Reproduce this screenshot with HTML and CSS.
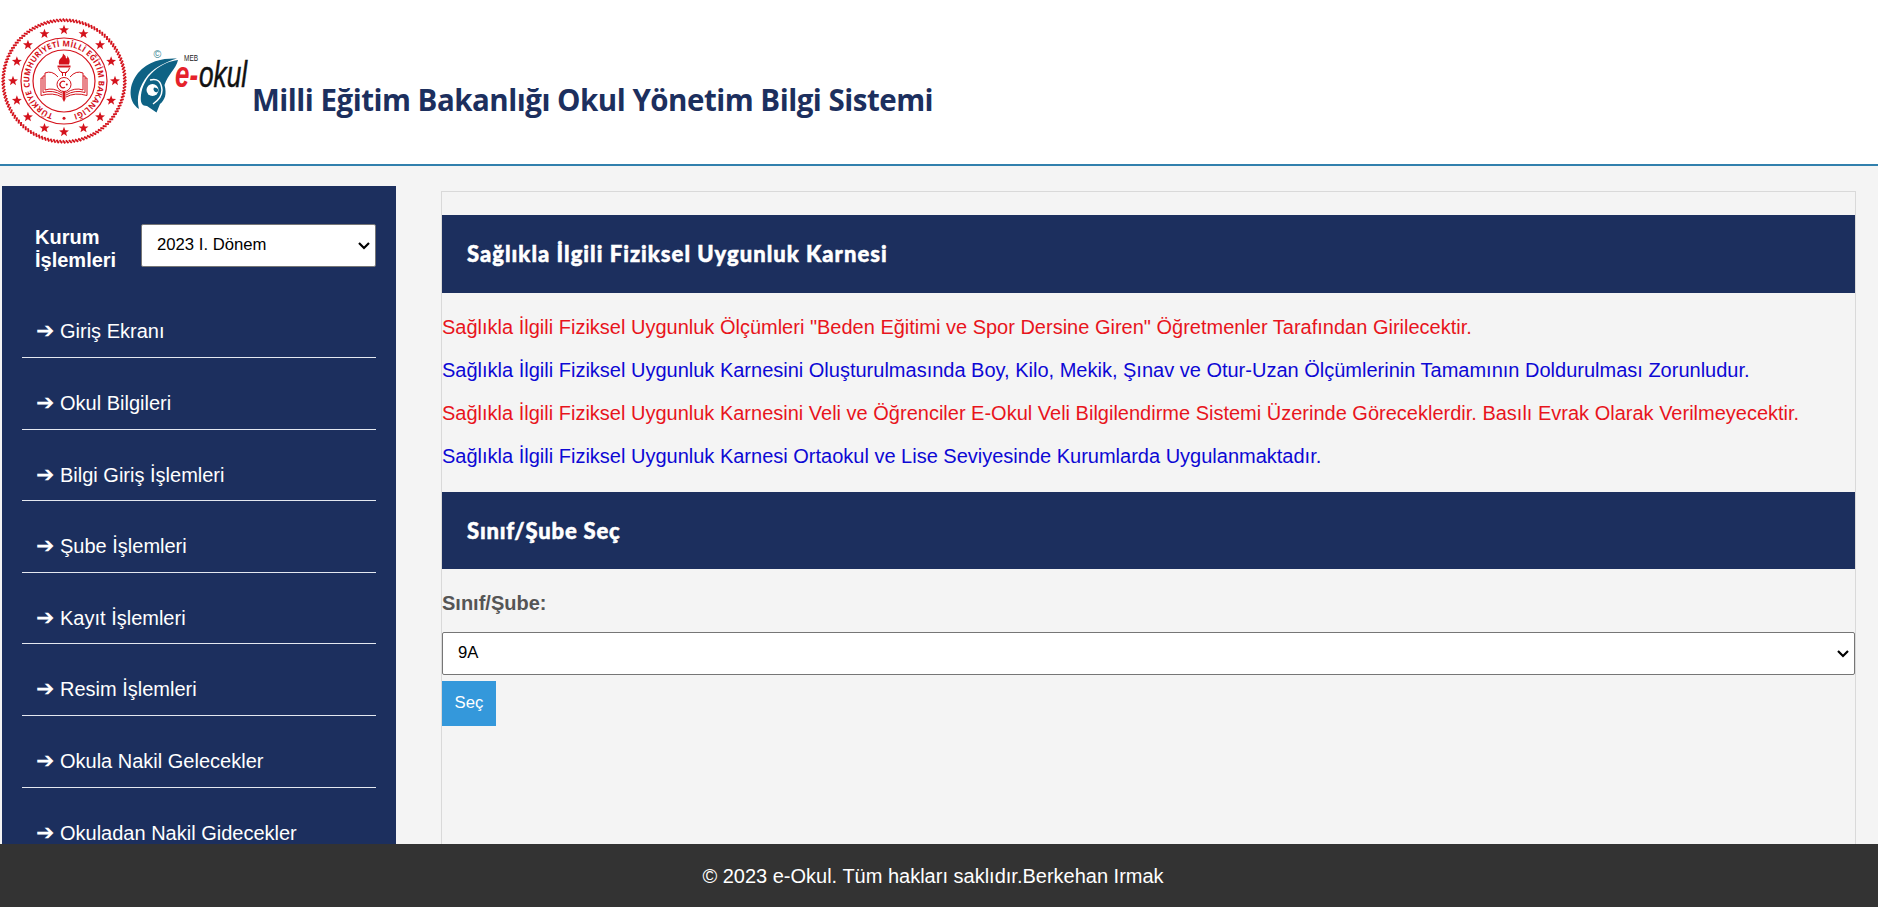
FILE: index.html
```html
<!DOCTYPE html>
<html lang="tr">
<head>
<meta charset="utf-8">
<title>e-Okul</title>
<link rel="stylesheet" href="styles.css">
</head>
<body>
<header class="header">
  <svg class="seal" width="128" height="128" viewBox="-64 -64 128 128">
    <defs>
      <path id="ring" d="M0 34.600A34.600 34.600 0 1 1 .01 34.600"/>
      <path id="star" d="M0-5.200 1.300-1.700 4.950-1.600 2.100.700 3.050 4.200 0 2.100-3.050 4.200-2.100.700-4.950-1.600-1.300-1.700Z"/>
    </defs>
    <g fill="none" stroke="#d4121c">
      <circle r="43" stroke-width="1.200"/>
      <circle r="31" stroke-width="1.200"/>
    </g>
    <g id="rope" stroke="#d4121c" stroke-width="1.900"></g>
    <g fill="#d4121c" id="stars"></g>
    <text class="seal-text"><textPath href="#ring" startOffset="11" textLength="196">TÜRKİYE CUMHURİYETİ MİLLİ EĞİTİM BAKANLIĞI</textPath></text>
    <circle cy="37.200" r="1.500" fill="#d4121c"/>
    <path fill="#d4121c" d="M-5-16.500Q-6-21-2.500-23.500-1-25-1-27.500 2-25.500 2-22.500 4-23 3-25.500 7-21 5-16.500ZM-6.500-15.500H6.500V-13.500H-6.500ZM-1.500 10H1.500V18L0 21-1.500 18Z"/>
    <g fill="none" stroke="#d4121c" stroke-width="1">
      <path d="M-5.500-13Q-5-9.500-1.500-8.500V-5M5.500-13Q5-9.500 1.500-8.500V-5M-3-8.500H3"/>
      <path d="M-6-4Q-12-11-19-8V9Q-11 6-2 12M6-4Q12-11 19-8V9Q11 6 2 12M-19-5H-21V11.500Q-11 8.500-2 14M19-5H21V11.500Q11 8.500 2 14M-21-3H-23V14.500Q-11 11-2 16M21-3H23V14.500Q11 11 2 16"/>
      <circle cy="3.500" r="7" fill="#fff"/>
      <path stroke-width="1.300" d="M1 .700A3.300 3.300 0 1 0 1 6.300"/>
    </g>
    <circle cx="2.800" cy="3.500" r="1" fill="#d4121c"/>
  </svg>
  <svg class="logo" width="120" height="70" viewBox="0 0 120 70">
    <path fill="#0e6284" d="M47 9.500C35 9 19 11 8 24-1 35-3 52 9 60 6 49 9 37 18 26 27 17 36 13 47 9.500Z"/>
    <path fill="#0e6284" d="M48 11C46 20 38 25 34.500 36 37 45 35 51 30 55L26.500 63.500 17 57C12 57 10 54 11 46 12 38 16 29 24 22 32 15 40 12 48 11Z"/>
    <path d="M20 31Q31 28 32 41Q32 49 23 55" stroke="#fff" stroke-width="1.500" fill="none"/>
    <circle cx="22.500" cy="41" r="6" fill="#fff"/>
    <path d="M24 38.500A3 3 0 0 0 27.500 43Q30 39 24 38.500Z" fill="#0e6284"/>
    <text class="copy" x="23.500" y="9">©</text>
    <text class="meb" x="54" y="12" textLength="14" lengthAdjust="spacingAndGlyphs">MEB</text>
    <text class="e" x="45" y="38" textLength="23" lengthAdjust="spacingAndGlyphs">e-</text>
    <text class="okul" x="69" y="38" textLength="48" lengthAdjust="spacingAndGlyphs">okul</text>
  </svg>
  <h1 class="title">Milli Eğitim Bakanlığı Okul Yönetim Bilgi Sistemi</h1>
</header>
<div class="layout">
  <nav class="sidebar">
    <div class="term">
      <strong class="term-label">Kurum İşlemleri</strong>
      <div class="field">
        <select class="select"><option>2023 I. Dönem</option></select>
        <svg class="chevron" width="12" height="8" viewBox="0 0 12 8"><path d="M1 1 6 6 11 1"/></svg>
      </div>
    </div>
    <ul class="menu">
      <li><a><span class="arrow">➔</span>Giriş Ekranı</a></li>
      <li><a><span class="arrow">➔</span>Okul Bilgileri</a></li>
      <li><a><span class="arrow">➔</span>Bilgi Giriş İşlemleri</a></li>
      <li><a><span class="arrow">➔</span>Şube İşlemleri</a></li>
      <li><a><span class="arrow">➔</span>Kayıt İşlemleri</a></li>
      <li><a><span class="arrow">➔</span>Resim İşlemleri</a></li>
      <li><a><span class="arrow">➔</span>Okula Nakil Gelecekler</a></li>
      <li><a><span class="arrow">➔</span>Okuladan Nakil Gidecekler</a></li>
    </ul>
  </nav>
  <main class="content">
    <h2 class="bar">Sağlıkla İlgili Fiziksel Uygunluk Karnesi</h2>
    <div class="notes">
      <p class="red">Sağlıkla İlgili Fiziksel Uygunluk Ölçümleri "Beden Eğitimi ve Spor Dersine Giren" Öğretmenler Tarafından Girilecektir.</p>
      <p class="blue">Sağlıkla İlgili Fiziksel Uygunluk Karnesini Oluşturulmasında Boy, Kilo, Mekik, Şınav ve Otur-Uzan Ölçümlerinin Tamamının Doldurulması Zorunludur.</p>
      <p class="red">Sağlıkla İlgili Fiziksel Uygunluk Karnesini Veli ve Öğrenciler E-Okul Veli Bilgilendirme Sistemi Üzerinde Göreceklerdir. Basılı Evrak Olarak Verilmeyecektir.</p>
      <p class="blue">Sağlıkla İlgili Fiziksel Uygunluk Karnesi Ortaokul ve Lise Seviyesinde Kurumlarda Uygulanmaktadır.</p>
    </div>
    <h2 class="bar bar-short">Sınıf/Şube Seç</h2>
    <label class="label" for="sube">Sınıf/Şube:</label>
    <div class="field wide">
      <select class="select" id="sube"><option>9A</option></select>
      <svg class="chevron" width="12" height="8" viewBox="0 0 12 8"><path d="M1 1 6 6 11 1"/></svg>
    </div>
    <button class="btn">Seç</button>
  </main>
</div>
<footer class="footer">© 2023 e-Okul. Tüm hakları saklıdır.Berkehan Irmak</footer>
<script src="seal.js"></script>
</body>
</html>
```
FILE: seal.js
```js
const NS = 'http://www.w3.org/2000/svg';

// Sixteen stars evenly spaced around the seal
const stars = document.getElementById('stars');
for (let i = 0; i < 16; i++) {
  const a = i * 22.5;
  const u = document.createElementNS(NS, 'use');
  u.setAttribute('href', '#star');
  u.setAttribute('transform', `rotate(${a}) translate(0 -51) rotate(${-a})`);
  stars.appendChild(u);
}

// Slanted strands of the outer rope border
const rope = document.getElementById('rope');
for (let i = 0; i < 120; i++) {
  const l = document.createElementNS(NS, 'path');
  l.setAttribute('d', 'M-1.3-62.3 1.3-59.3');
  l.setAttribute('transform', `rotate(${i * 3})`);
  rope.appendChild(l);
}
```
FILE: styles.css
```css
* { box-sizing: border-box; }
html, body { margin: 0; height: 100%; overflow: hidden; }
body {
  display: flex;
  flex-direction: column;
  background: #f4f4f4;
  font-family: "Liberation Sans", Arial, sans-serif;
  font-size: 20px;
}
.header {
  flex: none;
  display: flex;
  align-items: flex-start;
  height: 166px;
  background: #fff;
  border-bottom: 2px solid #3180ad;
}
.seal { margin-top: 17px; }
.seal-text { font: bold 8px "Open Sans", sans-serif; fill: #d4121c; }
.logo { margin: 49px 0 0 2px; overflow: visible; }
.copy { font: 10.5px "Liberation Sans", sans-serif; fill: #2f8290; }
.meb { font: 9.5px "Liberation Sans", sans-serif; fill: #222; }
.e { font: italic bold 37px "Liberation Sans", sans-serif; fill: #e5222b; }
.okul { font: italic 37px "Liberation Sans", sans-serif; fill: #111; stroke: #111; stroke-width: .5px; }
.title {
  margin: 79px 0 0 2px;
  font: bold 29.5px/42px "Open Sans", sans-serif;
  letter-spacing: -.5px;
  color: #1c2f5e;
  white-space: nowrap;
}
.layout { flex: 1; min-height: 0; display: flex; overflow: hidden; }
.sidebar {
  flex: none;
  width: 394px;
  margin: 20px 0 0 2px;
  padding: 38px 20px 0;
  background: #1c2f5e;
  color: #fff;
}
.term { display: flex; align-items: flex-start; height: 84px; padding-left: 13px; }
.term-label { width: 106px; margin-top: 2px; line-height: 23px; }
.field { position: relative; flex: 1; height: 43px; }
.select {
  appearance: none;
  width: 100%;
  height: 43px;
  padding: 0 15px 2px;
  border: 1px solid #767676;
  border-radius: 2px;
  background: #fff;
  color: #000;
  font: 16.7px "Liberation Sans", Arial, sans-serif;
}
.chevron {
  position: absolute;
  right: 6px;
  top: 18px;
  fill: none;
  stroke: #000;
  stroke-width: 2.2;
  pointer-events: none;
}
.menu { margin: 0; padding: 0; list-style: none; }
.menu li {
  height: 71.6px;
  padding: 34px 0 0 14px;
  border-bottom: 1px solid #e4e8f0;
  line-height: 23px;
}
.menu li:first-child { height: 50px; padding-top: 12px; }
.arrow {
  display: inline-block;
  width: 24px;
  font-size: 21.5px;
  line-height: 20px;
}
.content {
  display: flex;
  flex-direction: column;
  flex: none;
  width: 1415px;
  margin: 25px 0 0 45px;
  padding-top: 23px;
  border: 1px solid #d9d9d9;
  border-bottom: 0;
}
.bar {
  flex: none;
  height: 78px;
  margin: 0;
  padding-left: 25px;
  background: #1c2f5e;
  color: #fff;
  font: 900 22px/78px Lato, sans-serif;
  letter-spacing: 1.02px;
  -webkit-text-stroke: .5px #fff;
}
.bar-short { height: 77px; line-height: 77px; letter-spacing: .8px; }
.notes { height: 199px; padding-top: 23px; }
.notes p { margin: 0 0 20px; line-height: 23px; white-space: nowrap; }
.red { color: #e8141c; }
.blue { color: #0d08d4; }
.label { margin-top: 23px; height: 40px; line-height: 23px; font-weight: bold; color: #555; }
.wide { flex: none; width: 100%; }
.btn {
  align-self: flex-start;
  width: 54px;
  height: 45px;
  margin-top: 6px;
  padding: 0 0 1px;
  border: 0;
  background: #3498db;
  color: #fff;
  font: 16.7px "Liberation Sans", Arial, sans-serif;
}
.footer {
  flex: none;
  height: 63px;
  padding-right: 12px;
  background: #333;
  color: #fff;
  line-height: 65px;
  text-align: center;
}
```
